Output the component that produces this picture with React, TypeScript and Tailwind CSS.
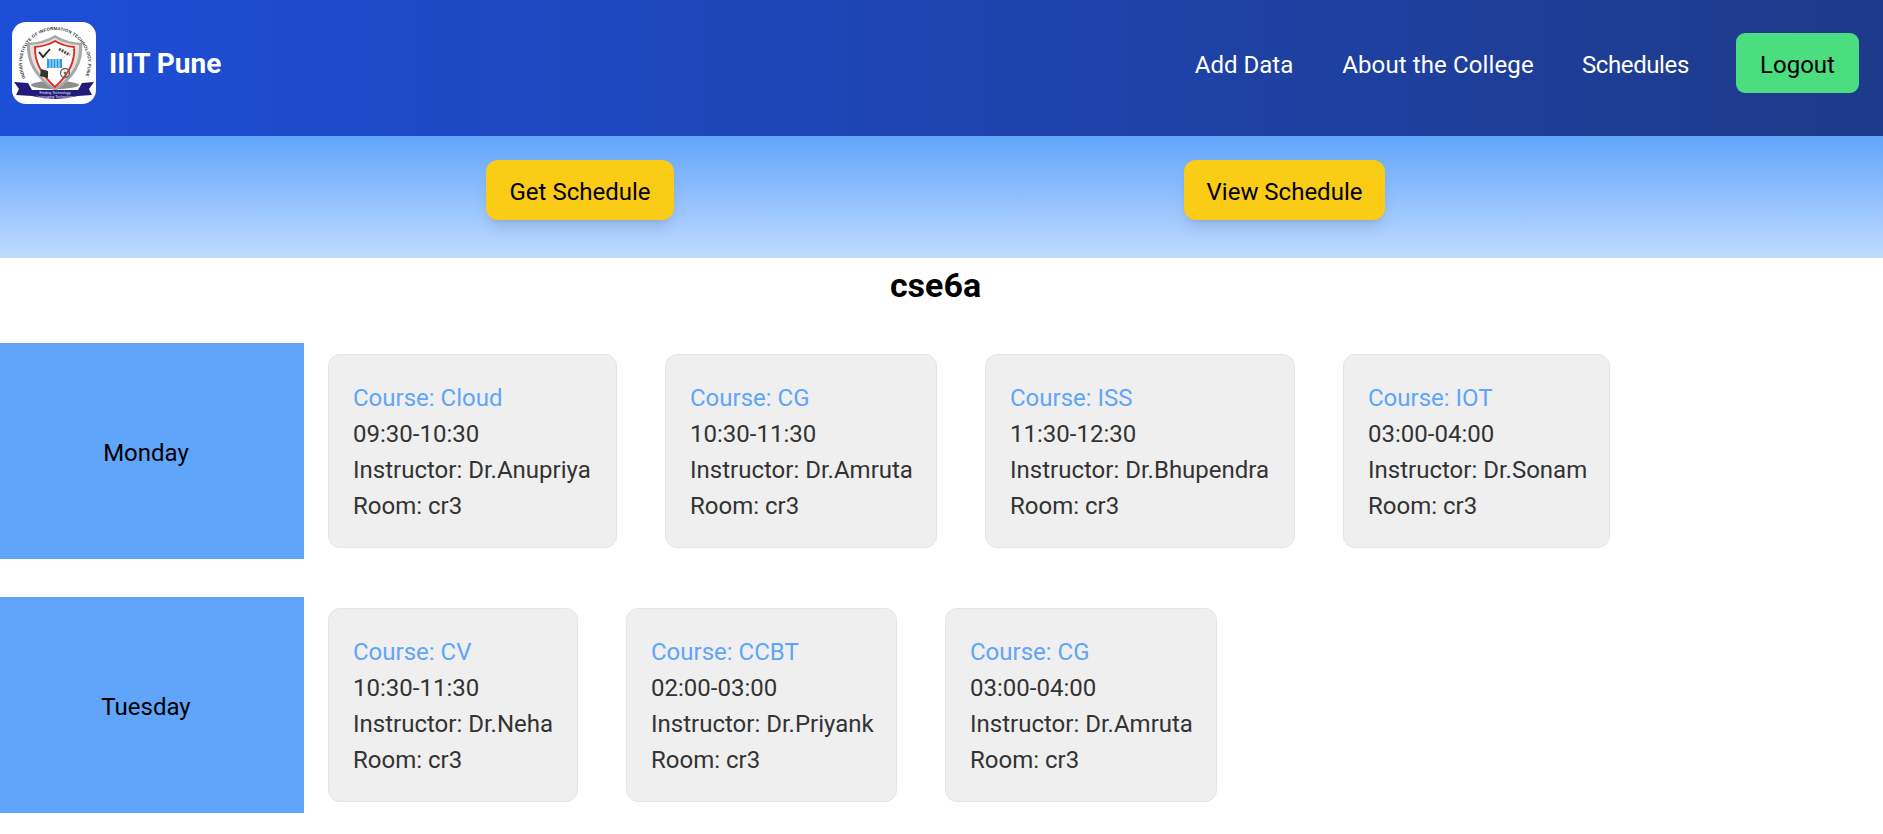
const days = [
  {
    name: 'Monday',
    classes: [
      { course: 'Cloud', time: '09:30-10:30', teacher: 'Dr.Anupriya', width: 'w-[289px]' },
      { course: 'CG', time: '10:30-11:30', teacher: 'Dr.Amruta', width: 'w-[272px]' },
      { course: 'ISS', time: '11:30-12:30', teacher: 'Dr.Bhupendra', width: 'w-[310px]' },
      { course: 'IOT', time: '03:00-04:00', teacher: 'Dr.Sonam', width: 'w-[267px]' },
    ],
  },
  {
    name: 'Tuesday',
    classes: [
      { course: 'CV', time: '10:30-11:30', teacher: 'Dr.Neha', width: 'w-[250px]' },
      { course: 'CCBT', time: '02:00-03:00', teacher: 'Dr.Priyank', width: 'w-[271px]' },
      { course: 'CG', time: '03:00-04:00', teacher: 'Dr.Amruta', width: 'w-[272px]' },
    ],
  },
];

function Logo() {
  return (
    <svg viewBox="0 0 84 82" className="w-[84px] h-[82px] shrink-0">
      <rect width="84" height="82" rx="14" fill="#fff" />
      <defs>
        <path id="logo-arc" d="M13.6 56 A33 33 0 1 1 72.4 56" />
      </defs>
      <text fontSize="4.4" fontWeight="700" fill="#333" fontFamily="Liberation Sans, sans-serif">
        <textPath href="#logo-arc" textLength="132" lengthAdjust="spacing">INDIAN INSTITUTE OF INFORMATION TECHNOLOGY PUNE</textPath>
      </text>
      <ellipse cx="43" cy="63" rx="24" ry="4" fill="#8d8d8d" />
      <path d="M15 21 Q32 20 43 13 Q54 20 70 21 Q73 50 43 69 Q13 50 15 21 Z" fill="#a8a8a8" />
      <path d="M18 23 Q33 22 43 16 Q53 22 67 23 Q69 48 43 66 Q17 48 18 23 Z" fill="#e2e2e2" />
      <path d="M23 25 Q35 24 43 19 Q51 24 62 25 Q64 46 43 65 Q22 46 23 25 Z" fill="#fff" stroke="#e0281f" strokeWidth="1.8" />
      <path d="M24 26 L36 37 M62 26 L50 37 M36 45 L30 53 M50 45 L56 53" stroke="#bbb" strokeWidth="0.7" />
      <path d="M27 30 L31 35 L38 27" fill="none" stroke="#222" strokeWidth="1.8" />
      <path d="M47 27 L58 33" stroke="#555" strokeWidth="3" strokeDasharray="2 1" />
      <rect x="35" y="37" width="15" height="9" fill="#2b9be8" />
      <path d="M38 37V46M41 37V46M44 37V46M47 37V46" stroke="#fff" strokeWidth="0.8" />
      <path d="M29 47 L36 49 L36 56 L28 54 Z" fill="#333" />
      <circle cx="53" cy="51" r="4.5" fill="none" stroke="#666" strokeWidth="1.3" />
      <circle cx="53" cy="51" r="1.3" fill="#666" />
      <path d="M2 60 L16 61 L20 68 L66 68 L70 61 L82 60 L77 67 L80 73 L66 74 Q43 80 20 74 L4 73 L7 67 Z" fill="#241a78" />
      <text x="43" y="71.5" fontSize="3.6" fill="#e8e8ff" textAnchor="middle" fontFamily="Liberation Sans, sans-serif">Finding Technology</text>
      <text x="43" y="76" fontSize="3.6" fill="#e8e8ff" textAnchor="middle" fontFamily="Liberation Sans, sans-serif">Leveraging Technology</text>
    </svg>
  );
}

export default function App() {
  return (
    <div className="min-h-[834px] bg-white font-['Roboto',sans-serif] text-[24px] leading-[36px]">
      <nav className="h-[136px] flex items-center justify-between pl-3 pr-6 pb-[10px] bg-gradient-to-r from-[#1d4ed8] to-[#1e3a8a]">
        <div className="flex items-center gap-[13px]">
          <Logo />
          <span className="font-bold text-white text-[28px] pt-[2px]">IIIT Pune</span>
        </div>
        <div className="flex items-center gap-12 text-white">
          <a className="w-[100px] text-center pt-[3px] whitespace-nowrap">Add Data</a>
          <a className="w-[192px] text-center pt-[3px] whitespace-nowrap tracking-[0.12px]">About the College</a>
          <a className="w-[106px] text-center pt-[3px] whitespace-nowrap tracking-[-0.4px]">Schedules</a>
          <button className="w-[123px] h-[60px] pt-[3px] rounded-[9px] bg-[#4ade80] text-black">Logout</button>
        </div>
      </nav>

      <div className="h-[122px] flex items-start pt-6 bg-gradient-to-b from-[#60a5fa] to-[#bfdbfe]">
        <button className="ml-[486px] w-[188px] h-[60px] pt-[3px] rounded-[12px] bg-[#facc15] text-black shadow-lg">Get Schedule</button>
        <button className="ml-[510px] w-[201px] h-[60px] pt-[3px] rounded-[12px] bg-[#facc15] text-black shadow-lg">View Schedule</button>
      </div>

      <h1 className="h-[54px] flex items-center justify-center pr-3 font-bold text-[34px] text-black">cse6a</h1>

      <div className="mt-[31px] flex flex-col gap-[38px]">
        {days.map((day) => (
          <div key={day.name} className="flex items-center">
            <div className="w-[304px] h-[216px] shrink-0 flex items-center justify-center pr-3 pt-[3px] bg-[#60a5fa] text-black">{day.name}</div>
            <div className="ml-6 flex gap-12">
              {day.classes.map((c) => (
                <div key={c.course + c.time} className={`${c.width} h-[194px] flex flex-col justify-center pl-6 pt-[2px] rounded-[12px] border-[1.5px] border-[#e5e5e5] bg-[#efefef] text-[#333]`}>
                  <div className="text-[#60a5fa]">Course: {c.course}</div>
                  <div>{c.time}</div>
                  <div>Instructor: {c.teacher}</div>
                  <div>Room: cr3</div>
                </div>
              ))}
            </div>
          </div>
        ))}
      </div>
    </div>
  );
}
